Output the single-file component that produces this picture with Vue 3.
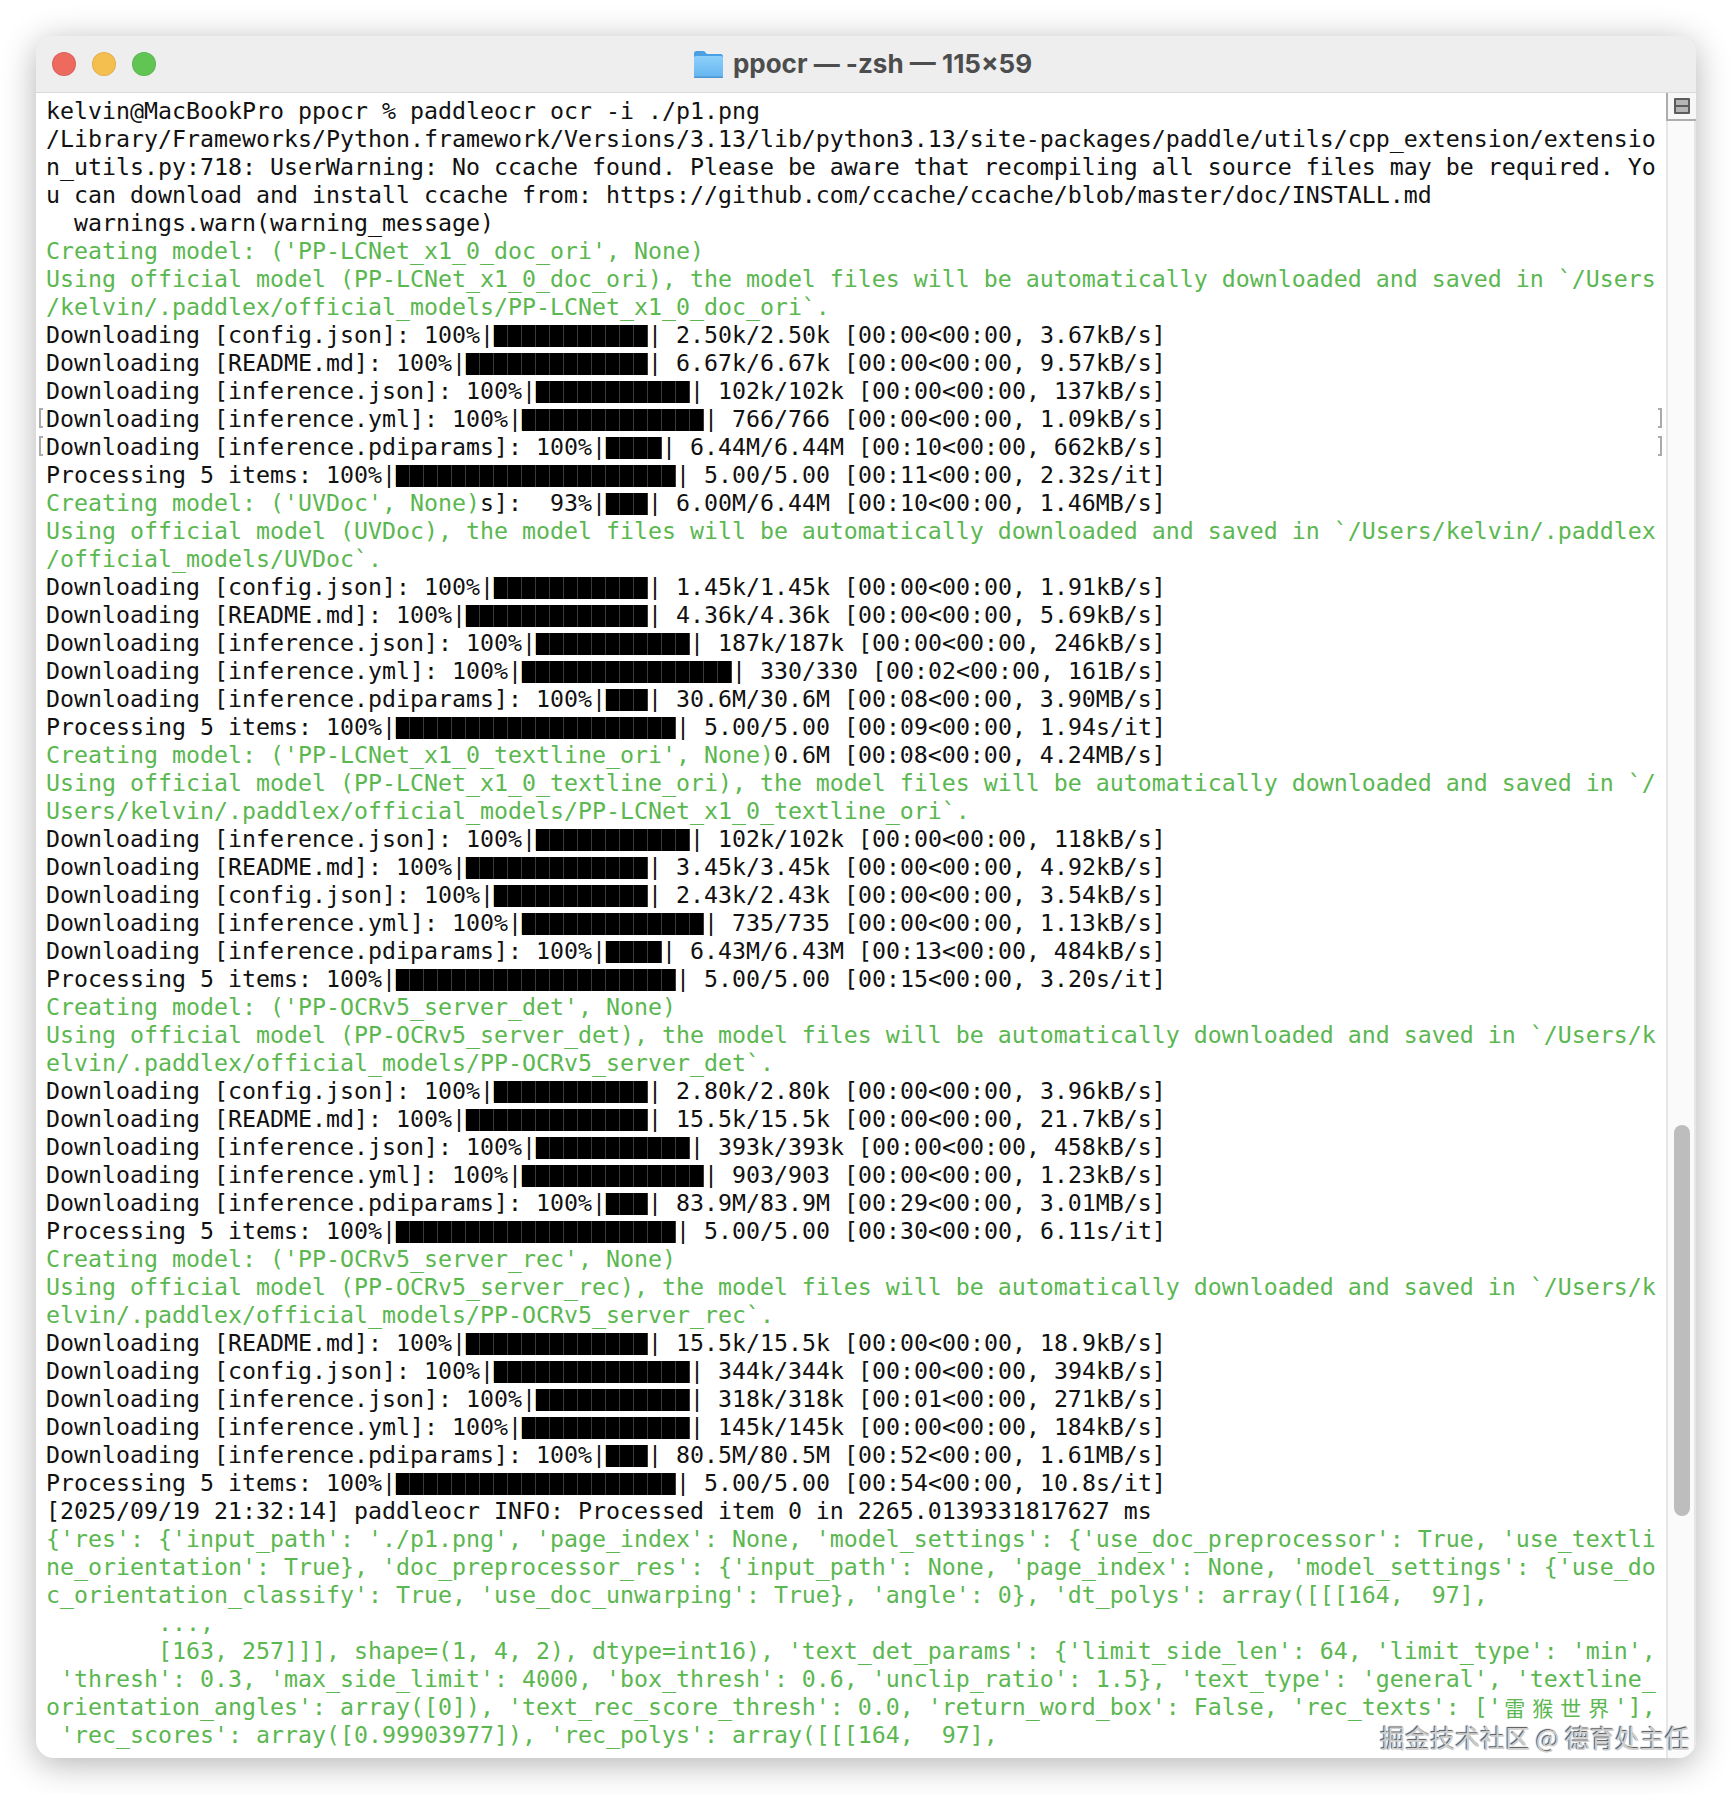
<script setup>
const k = (t) => ({ t, c: 'k' })
const g = (t) => ({ t, c: 'g' })
const b = (n) => ({ t: '█'.repeat(n), c: 'bar', n })
const cjk = (t) => ({ t, c: 'cjk' })
const row = (...segs) => ({ segs })
const dl = (name, n, rest) => row(k(`Downloading [${name}]: 100%|`), b(n), k(`| ${rest}`))
const proc = (rest) => row(k('Processing 5 items: 100%|'), b(20), k(`| ${rest}`))
const green = (t) => row(g(t))

const lines = [
  row(k('kelvin@MacBookPro ppocr % paddleocr ocr -i ./p1.png')),
  row(k('/Library/Frameworks/Python.framework/Versions/3.13/lib/python3.13/site-packages/paddle/utils/cpp_extension/extensio')),
  row(k('n_utils.py:718: UserWarning: No ccache found. Please be aware that recompiling all source files may be required. Yo')),
  row(k('u can download and install ccache from: https://github.com/ccache/ccache/blob/master/doc/INSTALL.md')),
  row(k('  warnings.warn(warning_message)')),
  green("Creating model: ('PP-LCNet_x1_0_doc_ori', None)"),
  green('Using official model (PP-LCNet_x1_0_doc_ori), the model files will be automatically downloaded and saved in `/Users'),
  green('/kelvin/.paddlex/official_models/PP-LCNet_x1_0_doc_ori`.'),
  dl('config.json', 11, '2.50k/2.50k [00:00<00:00, 3.67kB/s]'),
  dl('README.md', 13, '6.67k/6.67k [00:00<00:00, 9.57kB/s]'),
  dl('inference.json', 11, '102k/102k [00:00<00:00, 137kB/s]'),
  { ...dl('inference.yml', 13, '766/766 [00:00<00:00, 1.09kB/s]'), mark: true },
  { ...dl('inference.pdiparams', 4, '6.44M/6.44M [00:10<00:00, 662kB/s]'), mark: true },
  proc('5.00/5.00 [00:11<00:00, 2.32s/it]'),
  row(g("Creating model: ('UVDoc', None)"), k('s]:  93%|'), b(3), k('| 6.00M/6.44M [00:10<00:00, 1.46MB/s]')),
  green('Using official model (UVDoc), the model files will be automatically downloaded and saved in `/Users/kelvin/.paddlex'),
  green('/official_models/UVDoc`.'),
  dl('config.json', 11, '1.45k/1.45k [00:00<00:00, 1.91kB/s]'),
  dl('README.md', 13, '4.36k/4.36k [00:00<00:00, 5.69kB/s]'),
  dl('inference.json', 11, '187k/187k [00:00<00:00, 246kB/s]'),
  dl('inference.yml', 15, '330/330 [00:02<00:00, 161B/s]'),
  dl('inference.pdiparams', 3, '30.6M/30.6M [00:08<00:00, 3.90MB/s]'),
  proc('5.00/5.00 [00:09<00:00, 1.94s/it]'),
  row(g("Creating model: ('PP-LCNet_x1_0_textline_ori', None)"), k('0.6M [00:08<00:00, 4.24MB/s]')),
  green('Using official model (PP-LCNet_x1_0_textline_ori), the model files will be automatically downloaded and saved in `/'),
  green('Users/kelvin/.paddlex/official_models/PP-LCNet_x1_0_textline_ori`.'),
  dl('inference.json', 11, '102k/102k [00:00<00:00, 118kB/s]'),
  dl('README.md', 13, '3.45k/3.45k [00:00<00:00, 4.92kB/s]'),
  dl('config.json', 11, '2.43k/2.43k [00:00<00:00, 3.54kB/s]'),
  dl('inference.yml', 13, '735/735 [00:00<00:00, 1.13kB/s]'),
  dl('inference.pdiparams', 4, '6.43M/6.43M [00:13<00:00, 484kB/s]'),
  proc('5.00/5.00 [00:15<00:00, 3.20s/it]'),
  green("Creating model: ('PP-OCRv5_server_det', None)"),
  green('Using official model (PP-OCRv5_server_det), the model files will be automatically downloaded and saved in `/Users/k'),
  green('elvin/.paddlex/official_models/PP-OCRv5_server_det`.'),
  dl('config.json', 11, '2.80k/2.80k [00:00<00:00, 3.96kB/s]'),
  dl('README.md', 13, '15.5k/15.5k [00:00<00:00, 21.7kB/s]'),
  dl('inference.json', 11, '393k/393k [00:00<00:00, 458kB/s]'),
  dl('inference.yml', 13, '903/903 [00:00<00:00, 1.23kB/s]'),
  dl('inference.pdiparams', 3, '83.9M/83.9M [00:29<00:00, 3.01MB/s]'),
  proc('5.00/5.00 [00:30<00:00, 6.11s/it]'),
  green("Creating model: ('PP-OCRv5_server_rec', None)"),
  green('Using official model (PP-OCRv5_server_rec), the model files will be automatically downloaded and saved in `/Users/k'),
  green('elvin/.paddlex/official_models/PP-OCRv5_server_rec`.'),
  dl('README.md', 13, '15.5k/15.5k [00:00<00:00, 18.9kB/s]'),
  dl('config.json', 14, '344k/344k [00:00<00:00, 394kB/s]'),
  dl('inference.json', 11, '318k/318k [00:01<00:00, 271kB/s]'),
  dl('inference.yml', 12, '145k/145k [00:00<00:00, 184kB/s]'),
  dl('inference.pdiparams', 3, '80.5M/80.5M [00:52<00:00, 1.61MB/s]'),
  proc('5.00/5.00 [00:54<00:00, 10.8s/it]'),
  row(k('[2025/09/19 21:32:14] paddleocr INFO: Processed item 0 in 2265.0139331817627 ms')),
  green("{'res': {'input_path': './p1.png', 'page_index': None, 'model_settings': {'use_doc_preprocessor': True, 'use_textli"),
  green("ne_orientation': True}, 'doc_preprocessor_res': {'input_path': None, 'page_index': None, 'model_settings': {'use_do"),
  green("c_orientation_classify': True, 'use_doc_unwarping': True}, 'angle': 0}, 'dt_polys': array([[[164,  97],"),
  green('        ...,'),
  green("        [163, 257]]], shape=(1, 4, 2), dtype=int16), 'text_det_params': {'limit_side_len': 64, 'limit_type': 'min',"),
  green(" 'thresh': 0.3, 'max_side_limit': 4000, 'box_thresh': 0.6, 'unclip_ratio': 1.5}, 'text_type': 'general', 'textline_"),
  row(
    g("orientation_angles': array([0]), 'text_rec_score_thresh': 0.0, 'return_word_box': False, 'rec_texts': ['"),
    cjk('雷'), cjk('猴'), cjk('世'), cjk('界'),
    g("'],"),
  ),
  green(" 'rec_scores': array([0.99903977]), 'rec_polys': array([[[164,  97],"),
]
</script>

<template>
  <div class="page">
    <div class="window">
      <header class="titlebar">
        <div class="lights">
          <span class="light red"></span>
          <span class="light yellow"></span>
          <span class="light green"></span>
        </div>
        <div class="title">
          <svg class="folder" viewBox="0 0 29 27" width="29" height="27">
            <defs>
              <linearGradient id="fold" x1="0" y1="0" x2="0" y2="1">
                <stop offset="0" stop-color="#8ed0fb" />
                <stop offset="1" stop-color="#63b4ef" />
              </linearGradient>
            </defs>
            <path d="M0 2.5A2.5 2.5 0 0 1 2.500 0h6.500c1.500 0 2 .8 3 2l1 1h13.500A2.500 2.500 0 0 1 29 5.500V10H0z" fill="#4b9fe3" />
            <rect x="0" y="5" width="29" height="22" rx="2" fill="url(#fold)" />
            <rect x="0" y="25.500" width="29" height="1.500" rx=".7" fill="#4b94d2" />
          </svg>
          <span class="title-text">ppocr — -zsh — 115×59</span>
        </div>
      </header>
      <div class="body">
        <div class="term">
          <div v-for="(line, i) in lines" :key="i" class="line" :class="{ marked: line.mark }">
            <span v-for="(s, j) in line.segs" :key="j" :class="s.c">{{ s.t }}</span>
          </div>
        </div>
        <aside class="scroll">
          <div class="split"><span class="split-icon"><i></i><i></i></span></div>
          <div class="thumb"></div>
        </aside>
      </div>
      <div class="watermark">掘金技术社区 @ 德育处主任</div>
    </div>
  </div>
</template>

<style scoped>
.page {
  width: 1732px;
  height: 1794px;
  box-sizing: border-box;
  padding: 36px;
  background: #fff;
  overflow: hidden;
}
.window {
  position: relative;
  width: 1660px;
  height: 1722px;
  border-radius: 18px;
  background: #fff;
  box-shadow: 0 6px 34px rgba(0, 0, 0, 0.3);
  overflow: hidden;
  display: flex;
  flex-direction: column;
}
.titlebar {
  position: relative;
  flex: none;
  height: 56px;
  background: #eeeeee;
  border-bottom: 1px solid #d9d9d9;
  display: flex;
  align-items: center;
  justify-content: center;
}
.lights {
  position: absolute;
  left: 16px;
  top: 16px;
  display: flex;
  gap: 16px;
}
.light {
  width: 24px;
  height: 24px;
  border-radius: 50%;
  box-sizing: border-box;
  border: 1px solid rgba(0, 0, 0, 0.08);
}
.red { background: #ec6a5e; }
.yellow { background: #f5bf4f; }
.green { background: #61c554; }
.title {
  display: flex;
  align-items: center;
  gap: 10px;
  padding-right: 6px;
}
.folder { display: block; }
.title-text {
  font-family: Inter, "Liberation Sans", sans-serif;
  font-weight: 700;
  font-size: 26px;
  line-height: 30px;
  color: #4d4d4d;
  white-space: nowrap;
}
.body {
  flex: 1;
  min-height: 0;
  display: flex;
}
.term {
  flex: 1;
  min-width: 0;
  padding: 4px 0 0 10px;
  overflow: hidden;
  font-family: "DejaVu Sans Mono", "Liberation Mono", "Noto Sans CJK SC", monospace;
  font-size: 23.25px;
  line-height: 28px;
}
.line {
  position: relative;
  height: 28px;
  white-space: pre;
  color: #111;
}
.marked::before,
.marked::after {
  content: "";
  position: absolute;
  top: 3px;
  width: 2px;
  height: 16px;
  border: 2px solid #aaa;
}
.marked::before {
  left: -7px;
  border-right: none;
}
.marked::after {
  left: 1612px;
  border-left: none;
}
.k { color: #111; }
.g { color: #5bb750; }
.bar {
  position: relative;
  display: inline-block;
  vertical-align: top;
  height: 22px;
  margin-top: 4px;
  font-size: 18px;
  letter-spacing: 3.164px;
  line-height: 22px;
  background: #000;
  color: #000;
}
.bar::after {
  content: "";
  position: absolute;
  inset: 0;
  background: repeating-linear-gradient(90deg, transparent 0 13px, #3a3a3a 13px 14px);
}
.cjk {
  display: inline-block;
  width: 28px;
  box-sizing: border-box;
  padding-right: 2px;
  text-align: center;
  color: #5bb750;
  font-family: "Noto Sans CJK SC", sans-serif;
  font-size: 21px;
  line-height: 28px;
  vertical-align: top;
}
.scroll {
  flex: none;
  width: 30px;
  box-sizing: border-box;
  background: #fafafa;
  border-left: 2px solid #e6e6e6;
  border-right: 2px solid #e6e6e6;
}
.split {
  height: 28px;
  box-sizing: border-box;
  margin-left: -2px;
  margin-right: -2px;
  border-left: 2px solid #adadad;
  border-bottom: 2px solid #adadad;
  background: #f7f7f7;
  padding: 5px 0 0 6px;
}
.split-icon {
  display: flex;
  flex-direction: column;
  gap: 2px;
  width: 16px;
  height: 16px;
  box-sizing: border-box;
  padding: 2px;
  background: #5c5c5c;
  border-radius: 1px;
}
.split-icon i {
  flex: 1;
  background: #b5b5b5;
}
.thumb {
  width: 16px;
  height: 391px;
  margin: 1004px 0 0 6px;
  border-radius: 8px;
  background: #bdbdbd;
}
.watermark {
  position: absolute;
  right: 6px;
  bottom: 5px;
  font-family: "Noto Sans CJK SC", sans-serif;
  font-size: 25px;
  line-height: 32px;
  color: #cfcfcf;
  white-space: nowrap;
  text-shadow: -1px -1px 1px rgba(50, 50, 50, 0.85), 1px 1px 1px #fff;
}
</style>
